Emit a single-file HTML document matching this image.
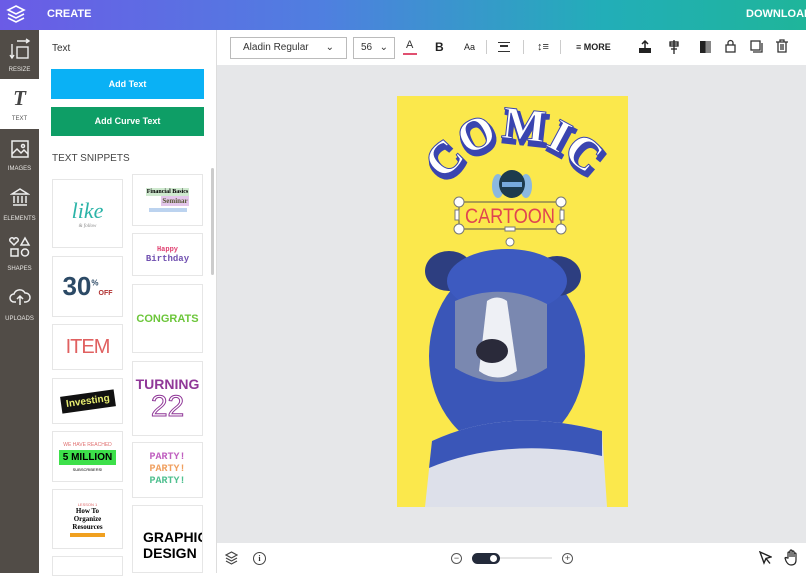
<!DOCTYPE html>
<html><head><meta charset="utf-8"><style>
*{margin:0;padding:0;box-sizing:border-box}
body{width:806px;height:573px;overflow:hidden;font-family:"Liberation Sans",sans-serif;position:relative;background:#fff}
.a{position:absolute}
.hdr{left:0;top:0;width:806px;height:30px;background:linear-gradient(90deg,#6b5be6 0%,#4f7fe0 40%,#22aeb8 75%,#1fb59a 100%);z-index:2}
.rail{left:0;top:30px;width:39px;height:543px;background:#514c47}
.ri{left:0;width:39px;height:50px;color:#e8e6e3;font-size:6px;text-align:center}
.ri span{position:absolute;left:0;right:0;bottom:7px}
.card{border:1px solid #e6e6e6;background:#fff;overflow:hidden;display:flex;align-items:center;justify-content:center;flex-direction:column}
.tb{color:#333;font-size:10px}
</style></head><body>
<div class="a hdr"></div>
<svg class="a" style="left:6px;top:4px;z-index:3" width="20" height="20" viewBox="0 0 20 20" fill="none" stroke="#fff" stroke-width="1.6"><path d="M10 2L18 6 10 10 2 6Z"/><path d="M2 10l8 4 8-4M2 14l8 4 8-4"/></svg>
<div class="a" style="left:47px;top:8px;color:#fff;font-weight:bold;font-size:11px;z-index:3">CREATE</div>
<div class="a" style="left:746px;top:8px;color:#fff;font-weight:bold;font-size:11px;z-index:3">DOWNLOAD</div>

<div class="a rail"></div>
<div class="a ri" style="top:30px"><svg style="margin-top:8px" width="22" height="22" viewBox="0 0 22 22" fill="none" stroke="#eee" stroke-width="1.4"><path d="M8 3h12M17 1l3 2-3 2M3 6v14M1 17l2 3 2-3"/><rect x="8" y="9" width="11" height="11"/></svg><span>RESIZE</span></div>
<div class="a ri" style="top:79px;height:50px;background:#fff;color:#555"><div style="font:italic bold 21px 'Liberation Serif',serif;color:#444;margin-top:7px">T</div><span>TEXT</span></div>
<div class="a ri" style="top:129px"><svg style="margin-top:10px" width="20" height="20" viewBox="0 0 20 20" fill="none" stroke="#eee" stroke-width="1.5"><rect x="2" y="2" width="16" height="16"/><path d="M2 15l5-5 4 4 3-3 4 4"/><circle cx="13" cy="7" r="1.5"/></svg><span>IMAGES</span></div>
<div class="a ri" style="top:179px"><svg style="margin-top:8px" width="20" height="20" viewBox="0 0 20 20" fill="none" stroke="#eee" stroke-width="1.5"><path d="M2 7L10 2l8 5ZM3 18h14M4 9v7M8 9v7M12 9v7M16 9v7"/></svg><span>ELEMENTS</span></div>
<div class="a ri" style="top:229px"><svg style="margin-top:7px" width="22" height="22" viewBox="0 0 22 22" fill="none" stroke="#eee" stroke-width="1.5"><path d="M5 9L1 5a2 2 0 0 1 4-2 2 2 0 0 1 4 2z"/><path d="M16 2l4 7h-8z"/><rect x="2" y="13" width="7" height="7"/><circle cx="16" cy="16.5" r="3.5"/></svg><span>SHAPES</span></div>
<div class="a ri" style="top:279px"><svg style="margin-top:8px" width="22" height="20" viewBox="0 0 22 20" fill="none" stroke="#eee" stroke-width="1.5"><path d="M7 15H5a4 4 0 0 1 0-8 6 6 0 0 1 11-1 4.5 4.5 0 0 1 1 9h-2M11 18V9M8 12l3-3 3 3"/></svg><span>UPLOADS</span></div>

<div class="a" style="left:39px;top:30px;width:178px;height:543px;background:#fff;border-right:1px solid #ddd"></div>
<div class="a" style="left:52px;top:43px;font-size:10px;color:#333">Text</div>
<div class="a" style="left:51px;top:69px;width:153px;height:30px;background:#0ab1f5;color:#fff;font-size:9px;font-weight:bold;text-align:center;line-height:30px">Add Text</div>
<div class="a" style="left:51px;top:107px;width:153px;height:29px;background:#0e9e66;color:#fff;font-size:9px;font-weight:bold;text-align:center;line-height:29px">Add Curve Text</div>
<div class="a" style="left:52px;top:153px;font-size:10px;color:#444">TEXT SNIPPETS</div>
<div class="a" style="left:211px;top:168px;width:3px;height:107px;background:#ccc;border-radius:2px"></div>

<div class="a card" style="left:52px;top:179px;width:71px;height:69px"><div style="font:italic 22px 'Liberation Serif',serif;color:#2cb4a8">like</div><div style="font:italic 5px serif;color:#888">& follow</div></div>
<div class="a card" style="left:52px;top:256px;width:71px;height:61px"><div style="font:bold 26px 'Liberation Sans';color:#2c4a66">30<sup style="font-size:8px">%</sup><span style="font-size:7px;color:#b03030">OFF</span></div></div>
<div class="a card" style="left:52px;top:324px;width:71px;height:46px"><div style="font:20px 'Liberation Sans';color:#e06060;letter-spacing:-1px">ITEM</div></div>
<div class="a card" style="left:52px;top:378px;width:71px;height:46px"><div style="background:#111;color:#e8ee70;font:bold 10px 'Liberation Sans';padding:3px 5px;transform:rotate(-8deg)">Investing</div></div>
<div class="a card" style="left:52px;top:431px;width:71px;height:51px"><div style="font-size:5px;color:#e07070">WE HAVE REACHED</div><div style="background:#3de04a;font:bold 10px 'Liberation Sans';padding:2px 4px;margin:2px 0">5 MILLION</div><div style="font-size:4px">SUBSCRIBERS!</div></div>
<div class="a card" style="left:52px;top:489px;width:71px;height:60px"><div style="font-size:4px;color:#d66">LESSON 1</div><div style="font:bold 7px 'Liberation Serif';text-align:center;line-height:8px">How To<br>Organize<br>Resources</div><div style="background:#f0a020;width:35px;height:4px;margin-top:2px"></div></div>
<div class="a card" style="left:52px;top:556px;width:71px;height:20px"></div>
<div class="a card" style="left:132px;top:174px;width:71px;height:52px"><div style="font:bold 6px serif;background:#cfe9cf;padding:1px">Financial Basics</div><div style="font:bold 7px serif;background:#e3c6ea;color:#553;padding:1px;margin-left:15px">Seminar</div><div style="background:#bcd3ef;width:38px;height:4px;margin-top:2px"></div></div>
<div class="a card" style="left:132px;top:233px;width:71px;height:43px"><div style="font:bold 7px monospace;color:#e04070">Happy</div><div style="font:bold 9px monospace;color:#7050b0">Birthday</div></div>
<div class="a card" style="left:132px;top:284px;width:71px;height:69px"><div style="font:bold 11px 'Liberation Sans';color:#6cc63a">CONGRATS</div></div>
<div class="a card" style="left:132px;top:361px;width:71px;height:75px"><div style="font:bold 14px 'Liberation Sans';color:#903898">TURNING</div><div style="font:30px 'Liberation Sans';color:#fff;-webkit-text-stroke:1px #903898;line-height:30px">22</div></div>
<div class="a card" style="left:132px;top:442px;width:71px;height:56px;font:bold 10px monospace;line-height:12px"><div style="color:#c060c0">PARTY!</div><div style="color:#f0a060">PARTY!</div><div style="color:#50c090">PARTY!</div></div>
<div class="a card" style="left:132px;top:505px;width:71px;height:68px;align-items:flex-start;padding-left:10px"><div style="font:bold 14px 'Liberation Sans';line-height:16px;margin-top:12px">GRAPHIC<br>DESIGN</div></div>

<!-- toolbar -->
<div class="a" style="left:217px;top:30px;width:589px;height:35px;background:#fff"></div>
<div class="a tb" style="left:230px;top:37px;width:117px;height:22px;border:1px solid #bbb;line-height:20px;padding-left:12px">Aladin Regular<span style="position:absolute;right:12px">⌄</span></div>
<div class="a tb" style="left:353px;top:37px;width:42px;height:22px;border:1px solid #bbb;line-height:20px;padding-left:7px">56<span style="position:absolute;right:6px">⌄</span></div>
<div class="a" style="left:406px;top:39px;font-size:11px;color:#333">A</div><div class="a" style="left:403px;top:53px;width:14px;height:2px;background:#e05070"></div>
<div class="a" style="left:435px;top:40px;font-weight:bold;font-size:12px;color:#222">B</div>
<div class="a" style="left:464px;top:42px;font-size:9px;color:#222">Aa</div>
<div class="a" style="left:486px;top:40px;width:1px;height:14px;background:#ccc"></div>
<div class="a" style="left:498px;top:42px;width:12px;height:10px;border-top:1.5px solid #333;border-bottom:1.5px solid #333"><div style="margin:2px 2px;height:1.5px;background:#333"></div></div>
<div class="a" style="left:523px;top:40px;width:1px;height:14px;background:#ccc"></div>
<div class="a" style="left:537px;top:41px;font-size:11px;color:#333">↕≡</div>
<div class="a" style="left:560px;top:40px;width:1px;height:14px;background:#ccc"></div>
<div class="a" style="left:576px;top:42px;font-size:9px;color:#222;font-weight:bold">≡ MORE</div>
<svg class="a" style="left:638px;top:40px" width="14" height="14" viewBox="0 0 14 14"><path d="M7 1v7M4 4l3-3 3 3" stroke="#222" fill="none" stroke-width="1.5"/><rect x="1" y="8" width="12" height="5" fill="#222"/></svg>
<svg class="a" style="left:668px;top:40px" width="12" height="14" viewBox="0 0 12 14" fill="none" stroke="#222" stroke-width="1.3"><path d="M6 0v14M2 4h8M3 9h6"/><rect x="2" y="2" width="8" height="4"/></svg>
<div class="a" style="left:700px;top:41px;width:11px;height:12px;background:linear-gradient(90deg,#222 50%,#888 50%)"></div>
<svg class="a" style="left:725px;top:39px" width="11" height="14" viewBox="0 0 11 14" fill="none" stroke="#333" stroke-width="1.3"><path d="M3 6V4a2.5 2.5 0 0 1 5 0v2"/><rect x="1" y="6" width="9" height="7"/></svg>
<svg class="a" style="left:750px;top:40px" width="13" height="13" viewBox="0 0 13 13" fill="none" stroke="#333" stroke-width="1.3"><rect x="1" y="1" width="9" height="9"/><path d="M12 3v9H3"/></svg>
<svg class="a" style="left:776px;top:39px" width="12" height="14" viewBox="0 0 12 14" fill="none" stroke="#333" stroke-width="1.3"><path d="M0 3h12M4 3V1h4v2M2 3v10h8V3M5 5v6M7 5v6"/></svg>

<!-- canvas -->
<div class="a" style="left:217px;top:65px;width:589px;height:478px;background:#e6e7e9"></div>
<div class="a" style="left:397px;top:96px;width:231px;height:411px;background:#fbe84c;overflow:hidden">
 <svg width="231" height="411" viewBox="0 0 231 411">
  <defs><path id="arc" d="M42 98 Q115 0 200 92"/></defs>
  <text font-family="Liberation Serif" font-weight="bold" font-size="46" fill="#3a45b0" stroke="#3a45b0" stroke-width="4" letter-spacing="1"><textPath href="#arc" startOffset="50%" text-anchor="middle">COMIC</textPath></text>
  <g transform="translate(-2,-4)"><text font-family="Liberation Serif" font-weight="bold" font-size="46" fill="#fff" stroke="#3a45b0" stroke-width="1" letter-spacing="1"><textPath href="#arc" startOffset="50%" text-anchor="middle">COMIC</textPath></text></g>
  <ellipse cx="101" cy="90" rx="6" ry="12" fill="#8bb8e0"/><ellipse cx="129" cy="90" rx="6" ry="12" fill="#8bb8e0"/>
  <ellipse cx="115" cy="88" rx="13" ry="14" fill="#1d3b4d"/><rect x="105" y="86" width="20" height="5" fill="#77aadd"/>
  <rect x="62" y="106" width="102" height="27" fill="none" stroke="#555" stroke-width="1"/>
  <text x="68" y="127" font-family="Liberation Sans" font-size="21" fill="#e04550" textLength="90" lengthAdjust="spacingAndGlyphs">CARTOON</text>
  <g fill="#fff" stroke="#777" stroke-width="1"><circle cx="62" cy="106" r="5"/><circle cx="164" cy="106" r="5"/><circle cx="62" cy="133" r="5"/><circle cx="164" cy="133" r="5"/><rect x="58" y="114" width="4" height="10"/><rect x="163" y="114" width="4" height="10"/><rect x="108" y="131" width="10" height="4"/><circle cx="113" cy="146" r="4"/></g>
  <!-- dog -->
  <ellipse cx="110" cy="260" rx="78" ry="95" fill="#3a56b8"/>
  <ellipse cx="52" cy="175" rx="24" ry="20" fill="#2d3e80"/><ellipse cx="160" cy="180" rx="24" ry="20" fill="#2d3e80"/>
  <ellipse cx="110" cy="185" rx="60" ry="32" fill="#3d5ac0"/>
  <path d="M58 205 Q105 185 150 208 L150 272 Q105 300 58 272Z" fill="#7a88b0"/>
  <path d="M90 205 Q100 198 110 205 L120 275 Q100 288 82 275Z" fill="#eef0f5"/>
  <ellipse cx="95" cy="255" rx="16" ry="12" fill="#2a2a3a"/>
  <path d="M35 345 Q110 310 205 335 L210 411 L28 411Z" fill="#dde0ea"/>
  <path d="M35 345 Q110 310 205 335 L205 360 Q110 340 32 372Z" fill="#3a56b8"/>
 </svg>
</div>

<!-- bottom -->
<div class="a" style="left:217px;top:543px;width:589px;height:30px;background:#fff"></div>
<svg class="a" style="left:225px;top:551px" width="13" height="14" viewBox="0 0 13 14" fill="none" stroke="#444" stroke-width="1.2"><path d="M6.5 1L12 4 6.5 7 1 4Z"/><path d="M1 7l5.5 3 5.5-3M1 10l5.5 3 5.5-3"/></svg>
<div class="a" style="left:253px;top:552px;width:13px;height:13px;border:1.4px solid #444;border-radius:50%;font:bold 8px serif;text-align:center;line-height:11px;color:#333">i</div>
<div class="a" style="left:451px;top:553px;width:11px;height:11px;border:1px solid #555;border-radius:50%;font-size:9px;line-height:8px;text-align:center;color:#444">−</div>
<div class="a" style="left:472px;top:557px;width:80px;height:2px;background:#e6e6e6"></div>
<div class="a" style="left:472px;top:553px;width:28px;height:11px;background:#232a3a;border-radius:6px"></div>
<div class="a" style="left:490px;top:555px;width:7px;height:7px;background:#fff;border-radius:50%"></div>
<div class="a" style="left:562px;top:553px;width:11px;height:11px;border:1px solid #555;border-radius:50%;font-size:9px;line-height:9px;text-align:center;color:#444">+</div>
<svg class="a" style="left:759px;top:551px" width="13" height="14" viewBox="0 0 13 14" fill="none" stroke="#222" stroke-width="1.4"><path d="M1 1l11 5-5 1.5L5 12Z M7 7.5l4 5"/></svg>
<svg class="a" style="left:784px;top:549px" width="16" height="17" viewBox="0 0 16 17" fill="none" stroke="#222" stroke-width="1.2"><path d="M4 9V4a1 1 0 0 1 2 0v4V2a1 1 0 0 1 2 0v6V3a1 1 0 0 1 2 0v5V5a1 1 0 0 1 2 0v6q0 5-5 5-3 0-5-4L1 9q1-1 2 0z"/></svg>
</body></html>
